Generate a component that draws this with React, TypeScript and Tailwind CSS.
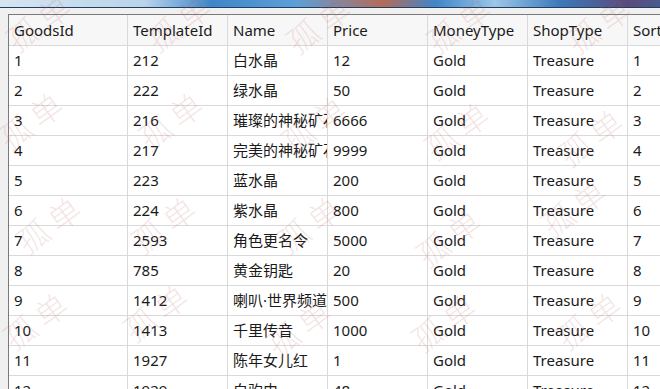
const columns = ["GoodsId", "TemplateId", "Name", "Price", "MoneyType", "ShopType", "Sort"]

const rows = [
  ["1", "212", "白水晶", "12", "Gold", "Treasure", "1"],
  ["2", "222", "绿水晶", "50", "Gold", "Treasure", "2"],
  ["3", "216", "璀璨的神秘矿石", "6666", "Gold", "Treasure", "3"],
  ["4", "217", "完美的神秘矿石", "9999", "Gold", "Treasure", "4"],
  ["5", "223", "蓝水晶", "200", "Gold", "Treasure", "5"],
  ["6", "224", "紫水晶", "800", "Gold", "Treasure", "6"],
  ["7", "2593", "角色更名令", "5000", "Gold", "Treasure", "7"],
  ["8", "785", "黄金钥匙", "20", "Gold", "Treasure", "8"],
  ["9", "1412", "喇叭·世界频道", "500", "Gold", "Treasure", "9"],
  ["10", "1413", "千里传音", "1000", "Gold", "Treasure", "10"],
  ["11", "1927", "陈年女儿红", "1", "Gold", "Treasure", "11"],
  ["12", "1929", "白驹由", "48", "Gold", "Treasure", "12"],
]

// watermark centres, roughly a 140 x 100 grid
const marks = [
  [40, 20], [180, 20], [320, 22], [460, 22], [600, 22],
  [32, 118], [172, 118], [315, 122], [458, 128], [592, 135],
  [50, 222], [165, 222], [310, 222], [450, 235], [575, 205],
  [37, 318], [157, 310], [300, 325], [445, 320], [590, 318],
]

const cellW = ["w-[119px]", "w-[100px]", "w-[100px]", "w-[100px]", "w-[100px]", "w-[100px]", "w-[100px]"]

const Cell = ({ text, i }: { text: string; i: number }) => (
  <div className={`${cellW[i]} shrink-0 h-full border-r border-[#d9d9d9] pl-[5px] flex items-center overflow-hidden whitespace-nowrap`}>
    {text}
  </div>
)

export default function App() {
  return (
    <div
      className="w-[660px] h-[389px] overflow-hidden relative bg-[#f0f0f0] text-[15px] text-[#1a1a1a]"
      style={{ fontFamily: '"Noto Sans", "Noto Sans CJK SC", sans-serif' }}
    >
      <div className="h-[7px] bg-[linear-gradient(to_right,#d6e5f1_0%,#b9d3ea_22%,#3f86c8_32%,#5d9fd8_45%,#b46a5a_58%,#3f86c8_66%,#9cc6ea_75%,#3a78b8_85%,#5b4a7c_95%,#4a5a8c_100%)]" />
      <div className="h-px bg-[#1f3f60]" />
      <div className="pl-[8px] pt-[6px]">
        <div className="border-l border-t border-[#7a7a7a] bg-white">
          <div className="flex h-[31px] border-b border-[#d9d9d9] bg-[#f7f7f7]">
            {columns.map((c, i) => (
              <Cell key={c} text={c} i={i} />
            ))}
          </div>
          {rows.map((r) => (
            <div key={r[0]} className="flex h-[30px] border-b border-[#d9d9d9]">
              {r.map((t, i) => (
                <Cell key={i} text={t} i={i} />
              ))}
            </div>
          ))}
        </div>
      </div>

      <div className="absolute inset-0 pointer-events-none">
        {marks.map(([x, y], k) => (
          <span
            key={k}
            className="absolute text-[32px] leading-none font-light text-[rgba(190,90,90,0.16)] whitespace-nowrap -translate-x-1/2 -translate-y-1/2 -rotate-[36deg] tracking-[6px]"
            style={{ left: x, top: y, fontFamily: '"Noto Sans CJK SC", sans-serif' }}
          >
            孤单
          </span>
        ))}
      </div>
    </div>
  )
}
